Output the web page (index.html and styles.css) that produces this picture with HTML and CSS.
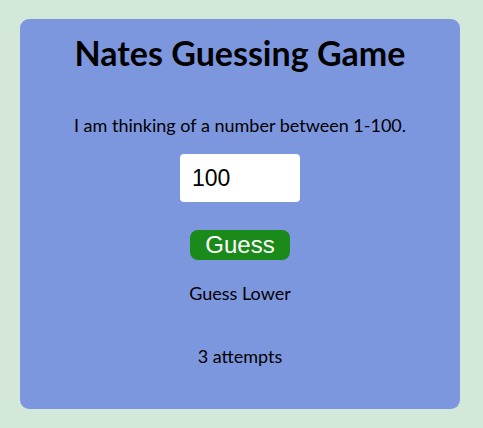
FILE: index.html
```html
<!DOCTYPE html>
<html>
<head>
<meta charset="utf-8">
<link rel="stylesheet" href="styles.css">
</head>
<body>
<div class="card">
  <h1 class="title">Nates Guessing Game</h1>
  <p class="intro">I am thinking of a number between 1-100.</p>
  <input class="guess-input" type="text" value="100">
  <button class="guess-btn">Guess</button>
  <p class="hint">Guess Lower</p>
  <p class="attempts">3 attempts</p>
</div>
</body>
</html>
```
FILE: styles.css
```css
html, body {
  margin: 0;
  padding: 0;
  background: #d3e8d8;
}
body {
  padding: 19px 23px 19px 20px;
  font-family: "Lato", "Open Sans", sans-serif;
}
.card {
  background: #7d97df;
  border-radius: 9px;
  height: 390px;
  box-sizing: border-box;
  display: flex;
  flex-direction: column;
  align-items: center;
  padding-top: 14px;
}
.title {
  margin: 0;
  font-size: 34px;
  font-weight: 700;
  line-height: 40px;
  color: #000;
}
.intro {
  margin: 40px 0 0;
  font-size: 18px;
  line-height: 24px;
}
.guess-input {
  margin-top: 17px;
  width: 120px;
  height: 48px;
  box-sizing: border-box;
  border: none;
  border-radius: 4px;
  background: #fff;
  padding: 0 12px;
  font-family: "Liberation Sans", Arial, sans-serif;
  font-size: 23px;
  color: #000;
  outline: none;
}
.guess-btn {
  margin-top: 28px;
  width: 100px;
  height: 30px;
  border: none;
  border-radius: 8px;
  background: #1a8a1a;
  color: #fff;
  font-family: "Liberation Sans", Arial, sans-serif;
  font-size: 24px;
  line-height: 30px;
  padding: 0;
}
.hint {
  margin: 21px 0 0;
  font-size: 18px;
  line-height: 24px;
}
.attempts {
  margin: 39px 0 0;
  font-size: 18px;
  line-height: 24px;
}
```
